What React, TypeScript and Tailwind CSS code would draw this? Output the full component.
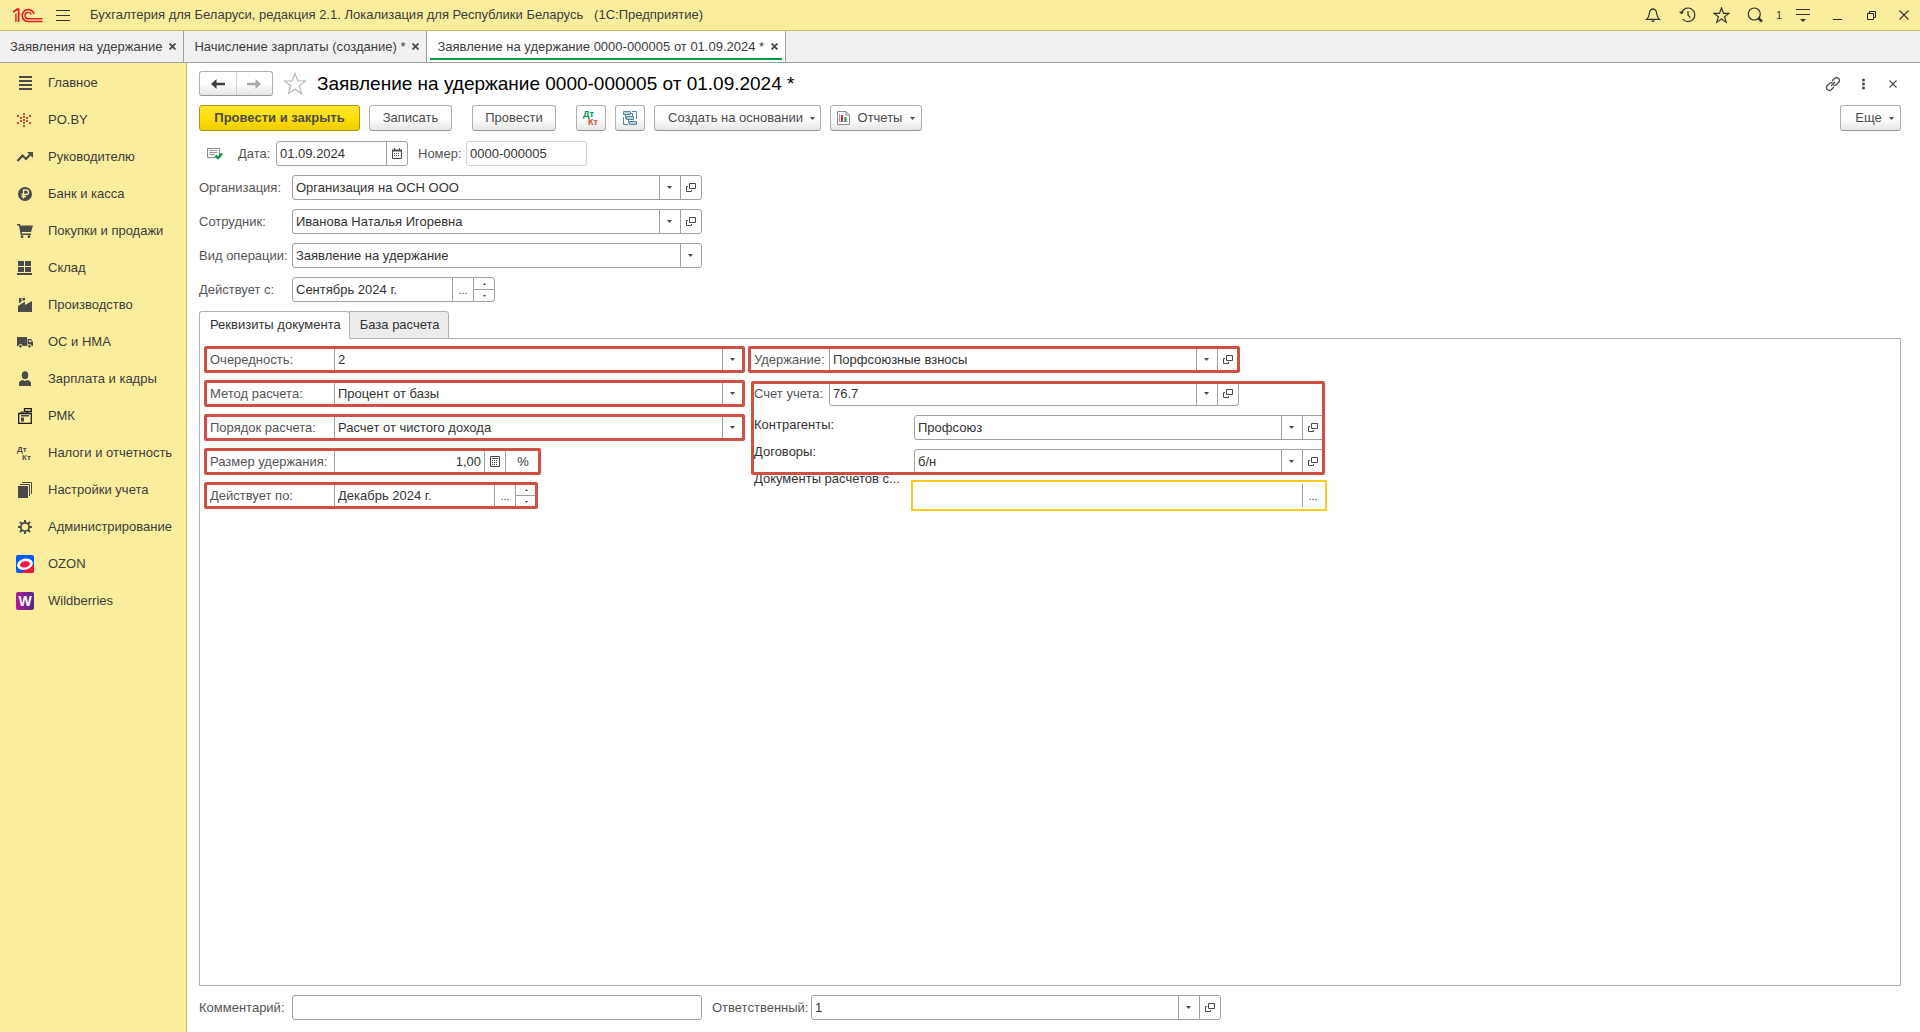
import { useId, useState } from 'react';
import type { ReactNode } from 'react';
import clsx from 'clsx';

const INK = '#4a4a4a';

/* ---------- Icons ---------- */

function Logo() {
  return (
    <svg width="30" height="15" viewBox="0 0 30 15" fill="none" stroke="#e31e24" aria-label="1С">
      <path d="M0 4.2 4.2 1.2H5.6V14" strokeWidth="1.8" />
      <path d="M2.9 5.5V14" strokeWidth="1.4" />
      <path d="M21 6A6 6 0 1 0 15.4 13.5H29.5" strokeWidth="1.7" />
      <path d="M18.3 6.6A3.2 3.2 0 1 0 15.4 10.8H29.5" strokeWidth="1.4" />
    </svg>
  );
}

function StarIcon({ size, color, width = 1.2 }: { size: number; color: string; width?: number }) {
  return (
    <svg width={size} height={size} viewBox="0 0 24 24" fill="none" stroke={color} strokeWidth={width}>
      <path d="M12 1.5 14.8 9H22.5L16.3 13.7 18.6 21.7 12 17 5.4 21.7 7.7 13.7 1.5 9H9.2Z" />
    </svg>
  );
}

function Caret() {
  return (
    <svg width="5" height="3" viewBox="0 0 5 3" fill={INK}>
      <path d="M0 0H5L2.5 3Z" />
    </svg>
  );
}

function OpenIcon() {
  return (
    <svg width="10" height="10" viewBox="0 0 10 10" fill="none" stroke={INK}>
      <path d="M3.5 .5H9.5V5.5H3.5Z" />
      <path d="M2 3.5H.5V8.5H5.5V7" />
    </svg>
  );
}

function CloseMark({ size = 7, width = 1.8, color = INK }: { size?: number; width?: number; color?: string }) {
  return (
    <svg width={size} height={size} viewBox={`0 0 ${size} ${size}`} stroke={color} strokeWidth={width}>
      <path d={`M.5 .5 ${size - 0.5} ${size - 0.5}M${size - 0.5} .5 .5 ${size - 0.5}`} />
    </svg>
  );
}

function CalendarIcon() {
  return (
    <svg width="10" height="11" viewBox="0 0 10 11" fill="none" stroke={INK}>
      <path d="M.5 2.5V10.5H9.5V2.5" />
      <path d="M0 2.5H10" strokeWidth="2" />
      <path d="M2.5 0V2M7.5 0V2" />
      <path d="M2 5.5H8M2 7.5H8" strokeDasharray="1 1" />
    </svg>
  );
}

function CalculatorIcon() {
  return (
    <svg width="10" height="11" viewBox="0 0 10 11" fill="none" stroke={INK}>
      <path d="M.5 .5H9.5V10.5H.5Z" />
      <path d="M2 2.5H8" />
      <path d="M2 4.5H8M2 6.5H8M2 8.5H8" strokeDasharray="1 1" />
    </svg>
  );
}

function DtKtIcon({ top, bottom, size = 9 }: { top: string; bottom: string; size?: number }) {
  return (
    <svg width="18" height="18" viewBox="0 0 18 18" fontFamily="Liberation Sans, sans-serif" fontWeight="bold" fontSize={size}>
      <text x="1" y="8" fill={top}>Дт</text>
      <text x="6" y="16" fill={bottom}>Кт</text>
    </svg>
  );
}

function StructureIcon() {
  return (
    <svg width="16" height="16" viewBox="0 0 16 16" fill="#b9cfdb" stroke="#56869f">
      <path d="M10 1.5H14.5V9M1.5 7V14.5H6M3.5 5V8.5H5M6.5 10V12.5H8M8.5 3.5H10.5V6" fill="none" />
      <path d="M1.5 1.5H8.5V4.5H1.5Z" />
      <path d="M4.5 6.5H11.5V9.5H4.5Z" />
      <path d="M7.5 11.5H14.5V14.5H7.5Z" />
    </svg>
  );
}

function ReportIcon() {
  return (
    <svg width="13" height="14" viewBox="0 0 13 14" fill="none">
      <path d="M.5 .5H9L12.5 4V13.5H.5Z" fill="#fff" stroke="#8a8a8a" />
      <path d="M9 .5V4H12.5" stroke="#8a8a8a" />
      <path d="M5 4V10" stroke="#dc1f2e" strokeWidth="2" />
      <path d="M8.5 6V10" stroke="#00963f" strokeWidth="2" />
      <path d="M2.5 3V10.5H10.5" stroke="#999" />
    </svg>
  );
}

function PostedIcon() {
  return (
    <svg width="16" height="13" viewBox="0 0 16 13" fill="none">
      <path d="M.5 1.5H12.5V10.5H.5Z" stroke="#888" />
      <path d="M2.5 3.5H10.5M2.5 5.5H10.5M2.5 7.5H8" stroke="#999" />
      <path d="M8.5 8.5 11 11 15 6.5" stroke="#0f9447" strokeWidth="2.4" />
    </svg>
  );
}

const bell = (
  <svg width="16" height="16" viewBox="0 0 16 16" fill="none" stroke="#333" strokeWidth="1.2">
    <path d="M8 1V2.2M1.5 12.4C4 10.5 4 9 4.3 6.5 4.6 3.6 6 2.2 8 2.2S11.4 3.6 11.7 6.5C12 9 12 10.5 14.5 12.4Z" />
    <path d="M6 13.5H10L8.8 15H7.2Z" fill="#333" stroke="none" />
  </svg>
);

const history = (
  <svg width="17" height="16" viewBox="0 0 17 16" fill="none" stroke="#333" strokeWidth="1.2">
    <path d="M2.6 5.5A6.8 6.8 0 1 1 3.6 12" />
    <path d="M9 4V8.2L11.5 10.7" />
    <path d="M0 4.5 5 4.8 2.4 7.4Z" fill="#333" stroke="none" />
  </svg>
);

const search = (
  <svg width="16" height="16" viewBox="0 0 16 16" fill="none" stroke="#333">
    <circle cx="7.3" cy="7" r="6" strokeWidth="1.2" />
    <path d="M11.3 11 15 14.6" strokeWidth="2.6" />
  </svg>
);

const serviceMenu = (
  <svg width="14" height="13" viewBox="0 0 14 13" fill="none" stroke="#333">
    <path d="M0 .5H14M0 5.5H14" />
    <path d="M4 10H10L7 13Z" fill="#333" stroke="none" />
  </svg>
);

const minimize = (
  <svg width="9" height="9" viewBox="0 0 9 9" stroke="#222">
    <path d="M0 8.5H9" />
  </svg>
);

const restore = (
  <svg width="9" height="9" viewBox="0 0 9 9" fill="none" stroke="#222">
    <path d="M.5 2.5H6.5V8.5H.5ZM2.5 2.5V.5H8.5V6.5H6.5" />
  </svg>
);

function SideIcon({ children }: { children: ReactNode }) {
  return (
    <svg width="18" height="18" viewBox="0 0 18 18" fill={INK} className="shrink-0">
      {children}
    </svg>
  );
}

const sections: { title: string; icon: ReactNode }[] = [
  {
    title: 'Главное',
    icon: <SideIcon><path d="M3 2H16V4H3ZM3 6H16V8H3ZM3 10H16V12H3ZM3 14H16V16H3Z" /></SideIcon>,
  },
  {
    title: 'PO.BY',
    icon: (
      <SideIcon>
        <path
          fill="#cf4a3c"
          d="M7 2h2v2h-2zM7 5h2v2h-2zM7 8h2v2h-2zM7 11h2v2h-2zM7 14h2v2h-2zM4 6h2v2h-2zM4 9h2v2h-2zM10 6h2v2h-2zM10 9h2v2h-2zM1 4h2v2h-2zM1 11h2v2h-2zM13 4h2v2h-2zM13 11h2v2h-2z"
        />
      </SideIcon>
    ),
  },
  {
    title: 'Руководителю',
    icon: (
      <SideIcon>
        <path d="M1.5 13 6.5 7.5 10 11 15 5.5" fill="none" stroke={INK} strokeWidth="2.2" />
        <path d="M11 4H17V10Z" />
      </SideIcon>
    ),
  },
  {
    title: 'Банк и касса',
    icon: (
      <SideIcon>
        <circle cx="9" cy="9" r="7" />
        <path d="M7.5 13.5V5H10.3A2.2 2.2 0 0 1 10.3 9.5H5.5M5.5 11.5H10" fill="none" stroke="#fbed9e" strokeWidth="1.4" />
      </SideIcon>
    ),
  },
  {
    title: 'Покупки и продажи',
    icon: (
      <SideIcon>
        <path d="M1 2H4L4.5 3.5H17L15 10H5.8L6 11.5H15V13H4.7L3 3.5H1Z" />
        <circle cx="6" cy="14.7" r="1.4" />
        <circle cx="13" cy="14.7" r="1.4" />
      </SideIcon>
    ),
  },
  {
    title: 'Склад',
    icon: <SideIcon><path d="M2 2H8V7H2ZM9 2H15V7H9ZM2 8H8V13H2ZM9 8H15V13H9ZM1 14H16V16H1Z" /></SideIcon>,
  },
  {
    title: 'Производство',
    icon: <SideIcon><path d="M2 10 9 5.5V9L16 5V16H2ZM3 2H5.5V5.5L3 7.5ZM6.5 2H9V4L6.5 5Z" /></SideIcon>,
  },
  {
    title: 'ОС и НМА',
    icon: (
      <SideIcon>
        <path d="M1 4H11V13H1ZM11.5 6H15L17 9V13H11.5Z" />
        <path d="M13 7.2H14.6L15.8 9H13Z" fill="#fbed9e" />
        <circle cx="4.5" cy="13.3" r="1.8" stroke="#fbed9e" />
        <circle cx="13.5" cy="13.3" r="1.8" stroke="#fbed9e" />
      </SideIcon>
    ),
  },
  {
    title: 'Зарплата и кадры',
    icon: (
      <SideIcon>
        <ellipse cx="9" cy="5.2" rx="3.2" ry="3.9" />
        <path d="M3 16V13C3 11 6 10.3 7 10L9 11 11 10C12 10.3 15 11 15 13V16Z" />
      </SideIcon>
    ),
  },
  {
    title: 'РМК',
    icon: (
      <SideIcon>
        <path d="M2.7 6.5H15.3V16.3H2.7ZM8.5 1.7H15.3V4.5H8.5ZM11 4.5V6.5" fill="none" stroke="#1c1c1c" strokeWidth="1.3" />
        <path d="M5 8H13V9.5H5ZM5 10.5H8V14.5H5ZM4.5 4.5H8V6H4.5Z" />
      </SideIcon>
    ),
  },
  { title: 'Налоги и отчетность', icon: <DtKtIcon top={INK} bottom={INK} size={8} /> },
  {
    title: 'Настройки учета',
    icon: (
      <SideIcon>
        <path d="M2 5H12V17H2Z" />
        <path d="M4 3.5H13.5V15M6 1.5H15.5V13" fill="none" stroke={INK} />
      </SideIcon>
    ),
  },
  {
    title: 'Администрирование',
    icon: (
      <SideIcon>
        <circle cx="9" cy="9" r="4.2" fill="none" stroke={INK} strokeWidth="1.8" />
        <path
          d="M9 2V4.8M9 13.2V16M2 9H4.8M13.2 9H16M4 4 6 6M12 12 14 14M4 14 6 12M12 6 14 4"
          stroke={INK}
          strokeWidth="2"
        />
      </SideIcon>
    ),
  },
  {
    title: 'OZON',
    icon: (
      <SideIcon>
        <rect width="18" height="18" rx="2" fill="#005bff" />
        <path d="M4 18 18 10V16A2 2 0 0 1 16 18Z" fill="#f1193f" />
        <ellipse cx="9" cy="9.2" rx="8" ry="5.6" fill="#fff" transform="rotate(-15 9 9.2)" />
        <ellipse cx="9" cy="9.4" rx="5" ry="3.1" fill="#f1193f" transform="rotate(-12 9 9.4)" />
      </SideIcon>
    ),
  },
  {
    title: 'Wildberries',
    icon: (
      <SideIcon>
        <defs>
          <linearGradient id="wb">
            <stop offset="0" stopColor="#b5179e" />
            <stop offset="1" stopColor="#4b2e83" />
          </linearGradient>
        </defs>
        <rect width="18" height="18" rx="2" fill="url(#wb)" />
        <text x="9" y="14" textAnchor="middle" fill="#fff" fontWeight="bold" fontSize="14" fontFamily="Liberation Sans, sans-serif">
          W
        </text>
      </SideIcon>
    ),
  },
];

/* ---------- Controls ---------- */

function TitleButton({ label, className, children }: { label: string; className?: string; children: ReactNode }) {
  return (
    <button type="button" aria-label={label} className={clsx('flex h-full items-center justify-center', className ?? 'w-[34px]')}>
      {children}
    </button>
  );
}

function ToolButton({ label, className, children }: { label?: string; className?: string; children: ReactNode }) {
  return (
    <button
      type="button"
      aria-label={label}
      className={clsx(
        'flex h-[26px] items-center justify-center rounded-[3px] border border-[#b0b0b0] border-b-[#969696] bg-linear-to-b from-white from-50% to-[#e6e6e6] text-[#4a4a4a]',
        className,
      )}
    >
      {children}
    </button>
  );
}

function CellButton({ label, children }: { label: string; children: ReactNode }) {
  return (
    <button type="button" aria-label={label} className="flex w-[21px] shrink-0 items-center justify-center border-l border-[#a0a0a0]">
      {children}
    </button>
  );
}

function Spinner() {
  return (
    <div className="flex w-[21px] shrink-0 flex-col border-l border-[#a0a0a0]">
      <button type="button" aria-label="Больше" className="flex flex-1 items-center justify-center border-b border-[#a0a0a0]">
        <svg width="3" height="2" viewBox="0 0 3 2" fill={INK}><path d="M0 2H3L1.5 0Z" /></svg>
      </button>
      <button type="button" aria-label="Меньше" className="flex flex-1 items-center justify-center">
        <svg width="3" height="2" viewBox="0 0 3 2" fill={INK}><path d="M0 0H3L1.5 2Z" /></svg>
      </button>
    </div>
  );
}

type FieldKind = 'text' | 'select' | 'reference' | 'date' | 'period' | 'number' | 'pick';

function Control({ id, kind, value, className }: { id: string; kind: FieldKind; value: string; className?: string }) {
  const isList = kind === 'select' || kind === 'reference';
  return (
    <div
      className={clsx(
        'flex h-[25px] shrink-0 overflow-hidden border bg-white text-[#333]',
        kind === 'pick'
          ? 'border-transparent outline-2 outline-offset-1 outline-[#fbc91f]'
          : 'rounded-[3px] border-[#a0a0a0]',
        className ?? 'w-[410px]',
      )}
    >
      {isList ? (
        <div className="relative flex min-w-0 flex-1">
          <select id={id} defaultValue={value} className="min-w-0 flex-1 appearance-none bg-transparent pr-6 pl-[3px] outline-none">
            <option>{value}</option>
          </select>
          <span className="pointer-events-none absolute inset-y-0 right-0 flex w-[21px] items-center justify-center border-l border-[#a0a0a0] pr-px pb-px">
            <Caret />
          </span>
        </div>
      ) : (
        <input
          id={id}
          defaultValue={value}
          className={clsx('w-0 min-w-0 flex-1 bg-transparent px-[3px] outline-none', kind === 'number' && 'text-right')}
        />
      )}
      {kind === 'reference' && <CellButton label="Открыть"><OpenIcon /></CellButton>}
      {kind === 'date' && <CellButton label="Выбрать дату"><CalendarIcon /></CellButton>}
      {kind === 'number' && <CellButton label="Калькулятор"><CalculatorIcon /></CellButton>}
      {(kind === 'period' || kind === 'pick') && (
        <CellButton label="Выбрать"><span className="text-[11px]">...</span></CellButton>
      )}
      {kind === 'period' && <Spinner />}
    </div>
  );
}

interface FieldProps {
  label: string;
  kind: FieldKind;
  value: string;
  labelClass?: string;
  className?: string;
}

function Field({ label, kind, value, labelClass, className }: FieldProps) {
  const id = useId();
  return (
    <>
      <label htmlFor={id} className={clsx('shrink-0 whitespace-nowrap text-[#555]', labelClass)}>
        {label}
      </label>
      <Control id={id} kind={kind} value={value} className={className} />
    </>
  );
}

/* Red frame that marks a field for the reader */
function Marker({ className }: { className?: string }) {
  return (
    <span
      className={clsx(
        'pointer-events-none absolute rounded-[2px] border-3 border-[#d15045]',
        className ?? '-inset-y-px -right-px -left-1.5',
      )}
    />
  );
}

/* ---------- Page parts ---------- */

function TitleBar() {
  return (
    <header className="flex h-[31px] items-center border-b border-[#cbbb62] bg-[#fbed9e] pl-[13px] text-[#3c3c3c]">
      <Logo />
      <button type="button" aria-label="Меню" className="ml-[13px]">
        <svg width="14" height="11" viewBox="0 0 14 11" stroke="#333">
          <path d="M0 .5H14M0 5.5H14M0 10.5H14" />
        </svg>
      </button>
      <span className="ml-5 flex-1 whitespace-pre">
        Бухгалтерия для Беларуси, редакция 2.1. Локализация для Республики Беларусь{'   '}(1С:Предприятие)
      </span>
      <TitleButton label="Уведомления">{bell}</TitleButton>
      <TitleButton label="История">{history}</TitleButton>
      <TitleButton label="Избранное"><StarIcon size={17} color="#333" width={1.7} /></TitleButton>
      <TitleButton label="Поиск">{search}</TitleButton>
      <span className="w-3.5 text-center text-[11px]">1</span>
      <TitleButton label="Сервис">{serviceMenu}</TitleButton>
      <TitleButton label="Свернуть">{minimize}</TitleButton>
      <TitleButton label="Развернуть">{restore}</TitleButton>
      <TitleButton label="Закрыть" className="w-8">
        <CloseMark size={10} width={1.1} color="#333" />
      </TitleButton>
    </header>
  );
}

const windows = [
  { title: 'Заявления на удержание', active: false },
  { title: 'Начисление зарплаты (создание) *', active: false },
  { title: 'Заявление на удержание 0000-000005 от 01.09.2024 *', active: true },
];

function WindowTabs() {
  return (
    <div className="flex h-8 border-b border-[#a0a0a0] bg-[#f1f1f1] text-[#3c3c3c]">
      {windows.map((w) => (
        <div key={w.title} className={clsx('flex border-r border-[#a0a0a0]', w.active ? 'bg-white px-[3px]' : 'px-0')}>
          <div
            className={clsx(
              'flex items-center gap-[7px]',
              w.active ? 'mb-0.5 border-b-2 border-[#009846] pt-1 pr-1 pl-[7px]' : 'pr-[7px] pl-2.5',
            )}
          >
            <button type="button" className="whitespace-nowrap">{w.title}</button>
            <button type="button" aria-label="Закрыть вкладку"><CloseMark /></button>
          </div>
        </div>
      ))}
    </div>
  );
}

function Sidebar() {
  return (
    <nav className="flex w-[187px] shrink-0 flex-col border-r border-[#c5b873] bg-[#fbed9e] pt-px text-[#3c3c3c]">
      {sections.map((s) => (
        <a key={s.title} href="#" className="flex h-[37px] items-center gap-3.5 pl-4 whitespace-nowrap">
          {s.icon}
          {s.title}
        </a>
      ))}
    </nav>
  );
}

function FormHeader() {
  return (
    <div className="flex items-center">
      <div className="flex h-[25px] w-[74px] rounded-[3px] border border-[#b0b0b0] border-b-[#969696] bg-linear-to-b from-white from-50% to-[#e6e6e6]">
        <button type="button" aria-label="Назад" className="flex flex-1 items-center justify-center border-r border-[#cfcfcf]">
          <svg width="14" height="10" viewBox="0 0 14 10" fill="#3f3f3f"><path d="M0 5 5.5 0V3.7H14V6.3H5.5V10Z" /></svg>
        </button>
        <button type="button" aria-label="Вперед" className="flex flex-1 items-center justify-center">
          <svg width="14" height="10" viewBox="0 0 14 10" fill="#a8a8a8"><path d="M14 5 8.5 0V3.7H0V6.3H8.5V10Z" /></svg>
        </button>
      </div>
      <button type="button" aria-label="В избранное" className="ml-2.5">
        <StarIcon size={24} color="#b5b5b5" width={1.1} />
      </button>
      <h1 className="ml-2.5 flex-1 text-[19px] text-black">Заявление на удержание 0000-000005 от 01.09.2024 *</h1>
      <div className="-mr-[7px] flex items-center">
        <button type="button" aria-label="Получить ссылку" className="flex w-[30px] justify-center">
          <svg width="16" height="16" viewBox="0 0 16 16" fill="none" stroke={INK} strokeWidth="1.3">
            <path d="M7 5 10 2A2.9 2.9 0 0 1 14 6L11.5 8.5A2.9 2.9 0 0 1 8.5 9.2" />
            <path d="M9 11 6 14A2.9 2.9 0 0 1 2 10L4.5 7.5A2.9 2.9 0 0 1 7.5 6.8" />
            <path d="M6 10 10 6" />
          </svg>
        </button>
        <button type="button" aria-label="Действия" className="flex w-[30px] justify-center">
          <svg width="3" height="12" viewBox="0 0 3 12" fill={INK}>
            <circle cx="1.5" cy="2" r="1.5" />
            <circle cx="1.5" cy="6" r="1.5" />
            <circle cx="1.5" cy="10" r="1.5" />
          </svg>
        </button>
        <button type="button" aria-label="Закрыть" className="flex w-[30px] justify-center">
          <CloseMark size={8} width={1.1} />
        </button>
      </div>
    </div>
  );
}

function Toolbar() {
  return (
    <div className="flex items-center gap-[9px]">
      <button
        type="button"
        className="h-[26px] w-[161px] rounded-[3px] border border-[#a8941a] bg-linear-to-b from-[#ffe62e] via-[#ffdf00] to-[#f0cd00] font-bold text-[#4a4a4a]"
      >
        Провести и закрыть
      </button>
      <ToolButton className="w-[83px]">Записать</ToolButton>
      <ToolButton className="ml-[11px] w-[84px]">Провести</ToolButton>
      <ToolButton label="Показать проводки" className="ml-[11px] w-[30px]">
        <DtKtIcon top="#009846" bottom="#d1493c" />
      </ToolButton>
      <ToolButton label="Структура подчиненности" className="w-[30px]"><StructureIcon /></ToolButton>
      <ToolButton className="w-[167px] gap-[7px] pl-2">Создать на основании <Caret /></ToolButton>
      <ToolButton className="w-[92px] gap-2"><ReportIcon /> Отчеты <Caret /></ToolButton>
      <ToolButton className="ml-auto w-[61px] gap-[7px] pl-2">Еще <Caret /></ToolButton>
    </div>
  );
}

function DocumentFields() {
  const numberId = useId();
  return (
    <div className="flex flex-col gap-[9px]">
      <div className="flex items-center">
        <span className="flex w-[39px] pl-2"><PostedIcon /></span>
        <Field label="Дата:" kind="date" value="01.09.2024" labelClass="w-[38px]" className="w-[132px]" />
        <label htmlFor={numberId} className="ml-2.5 w-12 text-[#555]">Номер:</label>
        <input
          id={numberId}
          readOnly
          value="0000-000005"
          className="h-[25px] w-[121px] rounded-[3px] border border-[#d0d0d0] px-[3px] text-[#333] outline-none"
        />
      </div>
      <div className="flex items-center">
        <Field label="Организация:" kind="reference" value="Организация на ОСН ООО" labelClass="w-[93px]" />
      </div>
      <div className="flex items-center">
        <Field label="Сотрудник:" kind="reference" value="Иванова Наталья Игоревна" labelClass="w-[93px]" />
      </div>
      <div className="flex items-center">
        <Field label="Вид операции:" kind="select" value="Заявление на удержание" labelClass="w-[93px]" />
      </div>
      <div className="flex items-center">
        <Field label="Действует с:" kind="period" value="Сентябрь 2024 г." labelClass="w-[93px]" className="w-[203px]" />
      </div>
    </div>
  );
}

function DeductionFields() {
  return (
    <div className="flex flex-col items-start gap-[9px]">
      <div className="relative flex items-center">
        <Field label="Очередность:" kind="select" value="2" labelClass="w-[124px]" />
        <Marker />
      </div>
      <div className="relative flex items-center">
        <Field label="Метод расчета:" kind="select" value="Процент от базы" labelClass="w-[124px]" />
        <Marker />
      </div>
      <div className="relative flex items-center">
        <Field label="Порядок расчета:" kind="select" value="Расчет от чистого дохода" labelClass="w-[124px]" />
        <Marker />
      </div>
      <div className="relative flex items-center">
        <Field label="Размер удержания:" kind="number" value="1,00" labelClass="w-[124px]" className="w-[172px]" />
        <span className="w-[34px] text-center text-[#333]">%</span>
        <Marker />
      </div>
      <div className="relative flex items-center">
        <Field label="Действует по:" kind="period" value="Декабрь 2024 г." labelClass="w-[124px]" className="w-[203px]" />
        <Marker />
      </div>
    </div>
  );
}

function AccountFields() {
  const contractor = useId();
  const contract = useId();
  const settlement = useId();
  return (
    <div className="flex flex-col gap-[9px]">
      <div className="relative flex items-center self-start">
        <Field label="Удержание:" kind="reference" value="Порфсоюзные взносы" labelClass="w-[75px]" />
        <Marker />
      </div>
      <div className="relative">
        <div className="flex items-center">
          <Field label="Счет учета:" kind="reference" value="76.7" labelClass="w-[75px]" />
        </div>
        <div className="mt-[9px] flex">
          <div className="-mt-1 flex w-40 flex-col leading-[27px] text-[#333]">
            <label htmlFor={contractor}>Контрагенты:</label>
            <label htmlFor={contract}>Договоры:</label>
            <label htmlFor={settlement} className="whitespace-nowrap">Документы расчетов с...</label>
          </div>
          <div className="flex flex-col gap-[9px]">
            <Control id={contractor} kind="reference" value="Профсоюз" />
            <Control id={contract} kind="reference" value="б/н" />
            <Control id={settlement} kind="pick" value="" />
          </div>
        </div>
        <Marker className="top-0 -right-px bottom-[33px] -left-[3px]" />
      </div>
    </div>
  );
}

function Footer() {
  return (
    <div className="flex items-center">
      <Field label="Комментарий:" kind="text" value="" labelClass="w-[93px]" />
      <Field label="Ответственный:" kind="reference" value="1" labelClass="ml-2.5 w-[99px]" />
    </div>
  );
}

const pages = ['Реквизиты документа', 'База расчета'];

export default function App() {
  const [page, setPage] = useState(pages[0]);

  return (
    <div className="flex min-h-screen flex-col bg-white font-['Liberation_Sans',Arial,sans-serif] text-[13px] leading-4">
      <TitleBar />
      <WindowTabs />
      <div className="flex flex-1">
        <Sidebar />
        <main className="flex min-w-0 flex-1 flex-col pt-2 pr-[19px] pb-3 pl-3">
          <FormHeader />
          <div className="mt-[9px]"><Toolbar /></div>
          <div className="mt-2.5"><DocumentFields /></div>

          <div role="tablist" className="mt-[9px] flex">
            {pages.map((p) => (
              <button
                key={p}
                type="button"
                role="tab"
                aria-selected={p === page}
                onClick={() => setPage(p)}
                className={clsx(
                  'relative -mb-px h-7 border border-[#b0b0b0] pr-2 pl-2.5 text-[#333]',
                  p === page ? 'z-10 rounded-t-[3px] border-b-white bg-white' : '-ml-px rounded-tr-[3px] bg-[#ececec]',
                )}
              >
                {p}
              </button>
            ))}
          </div>
          <section className="flex-1 border border-[#b0b0b0] px-2.5 py-2">
            {page === pages[0] && (
              <div className="flex items-start gap-2.5">
                <DeductionFields />
                <AccountFields />
              </div>
            )}
          </section>

          <div className="mt-[9px]"><Footer /></div>
        </main>
      </div>
    </div>
  );
}
